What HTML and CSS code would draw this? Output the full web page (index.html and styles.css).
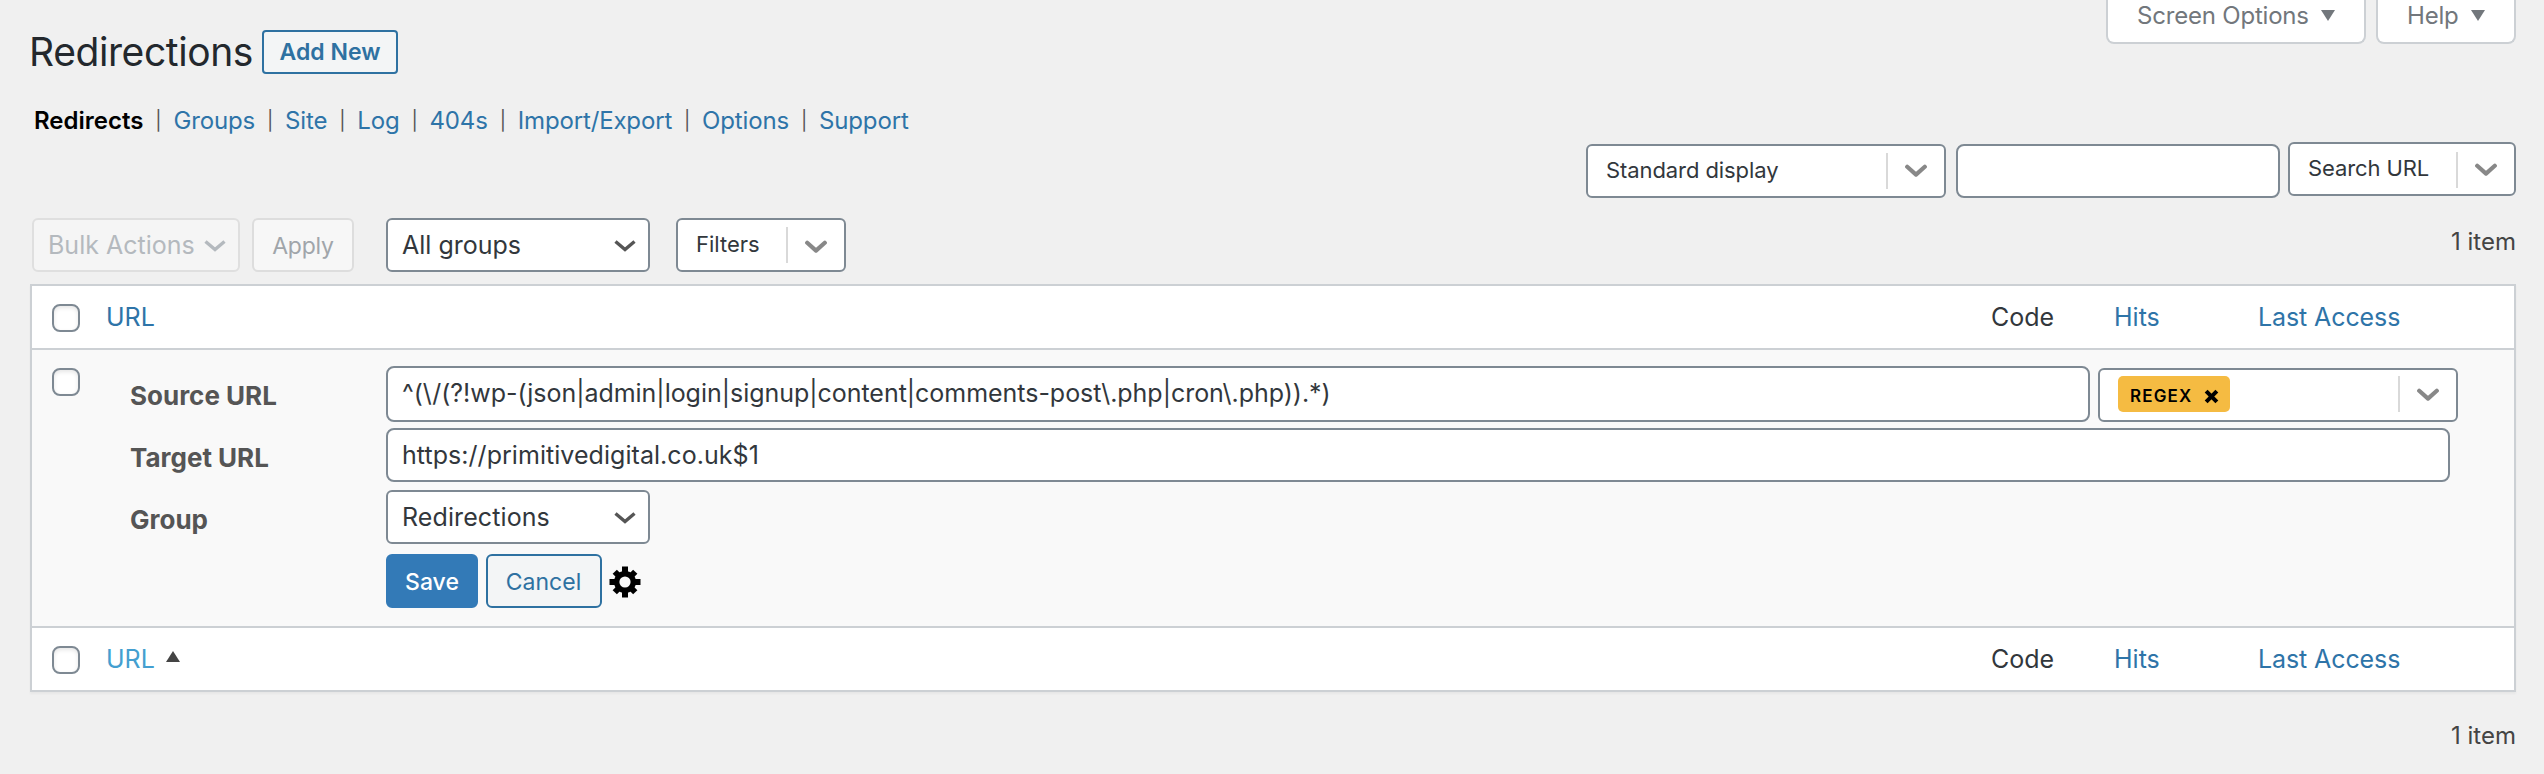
FILE: index.html
```html
<!DOCTYPE html>
<html lang="en">
<head>
<meta charset="utf-8">
<title>Redirections</title>
<link rel="stylesheet" href="styles.css">
</head>
<body>
<svg class="defs" aria-hidden="true">
  <symbol id="thin" viewBox="0 0 22 14"><path d="M1.5 2.5 11 10.5 20.5 2.5" fill="none" stroke="currentColor" stroke-width="3.4"/></symbol>
  <symbol id="thick" viewBox="0 0 22 14"><path d="M2.2 2.8 11 10.6 19.8 2.8" fill="none" stroke="currentColor" stroke-width="4.2" stroke-linecap="round" stroke-linejoin="round"/></symbol>
</svg>
<header class="top">
  <div class="title-row">
    <h1 class="title">Redirections</h1>
    <a class="add-new">Add New</a>
  </div>
  <div class="tabs">
    <button class="tab tab-options">Screen Options<i class="down"></i></button>
    <button class="tab tab-help">Help<i class="down"></i></button>
  </div>
</header>
<nav class="subnav">
  <b>Redirects</b><span class="bar">|</span><a>Groups</a><span class="bar">|</span><a>Site</a><span class="bar">|</span><a>Log</a><span class="bar">|</span><a>404s</a><span class="bar">|</span><a>Import/Export</a><span class="bar">|</span><a>Options</a><span class="bar">|</span><a>Support</a>
</nav>
<div class="search-row">
  <div class="combo display"><span class="combo-text">Standard display</span><i class="rule"></i><svg class="chev"><use href="#thick"/></svg></div>
  <input class="field search" type="text" aria-label="Search">
  <div class="combo search-by"><span class="combo-text">Search URL</span><i class="rule"></i><svg class="chev"><use href="#thick"/></svg></div>
</div>
<div class="actions">
  <div class="select bulk"><span>Bulk Actions</span><svg class="chev"><use href="#thin"/></svg></div>
  <button class="apply">Apply</button>
  <div class="select groups"><span>All groups</span><svg class="chev"><use href="#thin"/></svg></div>
  <div class="combo filters"><span class="combo-text">Filters</span><i class="rule"></i><svg class="chev"><use href="#thick"/></svg></div>
  <span class="count">1 item</span>
</div>
<main class="table">
  <div class="row head">
    <i class="check"></i><a class="col-url">URL</a><span class="col-code">Code</span><a class="col-hits">Hits</a><a class="col-last">Last Access</a>
  </div>
  <div class="edit">
    <i class="check"></i>
    <div class="form">
      <div class="line source-line">
        <label>Source URL</label>
        <input class="field source" type="text" value="^(\/(?!wp-(json|admin|login|signup|content|comments-post\.php|cron\.php)).*)">
        <div class="combo flags">
          <span class="badge">REGEX<svg class="cross" viewBox="0 0 14 14"><path d="M2 2l10 10M12 2l-10 10" stroke="#000" stroke-width="3.8"/></svg></span>
          <i class="rule"></i><svg class="chev"><use href="#thick"/></svg>
        </div>
      </div>
      <div class="line target-line">
        <label>Target URL</label>
        <input class="field target" type="text" value="https://primitivedigital.co.uk$1">
      </div>
      <div class="line group-line">
        <label>Group</label>
        <div class="select groups"><span class="wide">Redirections</span><svg class="chev"><use href="#thin"/></svg></div>
      </div>
      <div class="buttons">
        <button class="save">Save</button>
        <button class="cancel">Cancel</button>
        <svg class="gear" viewBox="-16 -16 32 32">
          <g fill="#000"><path d="M-3-15.5H3V15.5H-3z"/><path d="M-15.5-3V3H15.5V-3z"/><path d="M-3-14.5H3V14.5H-3z" transform="rotate(45)"/><path d="M-3-14.5H3V14.5H-3z" transform="rotate(-45)"/><circle r="11"/></g>
          <circle r="5.6" fill="#f9f9f9"/>
        </svg>
      </div>
    </div>
  </div>
  <div class="row foot">
    <i class="check"></i><a class="col-url sorted">URL<i class="up"></i></a><span class="col-code">Code</span><a class="col-hits">Hits</a><a class="col-last">Last Access</a>
  </div>
</main>
<div class="bottom"><span class="count">1 item</span></div>
</body>
</html>
```
FILE: styles.css
```css
* { box-sizing: border-box; }
body {
  margin: 0;
  height: 774px;
  padding: 0 28px 0 30px;
  overflow: hidden;
  background: #f0f0f0;
  color: #32373c;
  font: 25px/30px Inter, "Liberation Sans", sans-serif;
}
input, button { font: inherit; margin: 0; }
i { font-style: normal; }
a { color: #2e74a8; }
.defs { display: none; }
.chev { flex: none; width: 22px; height: 14px; }

.top { display: flex; justify-content: space-between; height: 106px; }
.title-row { display: flex; padding-top: 30px; height: 74px; }
.title {
  width: 233px;
  margin: 0 0 0 -1px;
  font-size: 39px;
  line-height: 44px;
  font-weight: 400;
  letter-spacing: -0.4px;
  color: #23282d;
  white-space: nowrap;
}
.add-new {
  width: 136px;
  height: 44px;
  border: 2px solid #2e71a1;
  border-radius: 4px;
  background: #f3f5f6;
  font-size: 23px;
  font-weight: 600;
  line-height: 41px;
  text-align: center;
  color: #2e71a1;
}
.tabs { display: flex; gap: 10px; }
.tab {
  display: flex;
  align-items: center;
  height: 44px;
  padding: 0 0 10px;
  border: 2px solid #ccd0d4;
  border-top: 0;
  border-radius: 0 0 8px 8px;
  background: #fff;
  font-size: 24px;
  letter-spacing: -0.2px;
  color: #72777c;
}
.tab-options { width: 260px; padding-left: 29px; }
.tab-help { width: 140px; padding-left: 29px; }
.down {
  margin: -2px 0 0 12px;
  border: 7px solid transparent;
  border-top: 11px solid #72777c;
  border-bottom: 0;
}
.tab-help .down { margin-left: 12px; }

.subnav {
  display: flex;
  height: 36px;
  padding-left: 4px;
  font-size: 24px;
  letter-spacing: -0.15px;
}
.subnav b { font-weight: 600; letter-spacing: 0; color: #000; }
.bar { width: 30px; font-size: 19px; text-align: center; color: #555; }

.search-row { display: flex; justify-content: flex-end; align-items: flex-start; height: 76px; }
.combo {
  display: flex;
  align-items: center;
  height: 54px;
  padding-right: 17px;
  border: 2px solid #7e8993;
  border-radius: 6px;
  background: #fff;
  color: #32373c;
}
.combo .chev { margin-left: 17px; color: #888; }
.combo-text { flex: 1; padding: 0 0 2px 18px; font-size: 22px; }
.rule { width: 2px; height: 36px; background: #d9d9d9; }
.display { width: 360px; margin: 2px 10px 0 0; }
.display .combo-text { letter-spacing: -0.08px; }
.search-by { width: 228px; margin-left: 8px; }
.search-by .combo-text { letter-spacing: -0.1px; }
.search-by .rule, .search-by .chev { margin-top: 2px; }
.field {
  height: 54px;
  padding: 0 14px;
  border: 2px solid #7e8993;
  border-radius: 8px;
  background: #fff;
  color: #32373c;
}
.search { width: 324px; margin-top: 2px; }

.actions { display: flex; height: 66px; padding-left: 2px; }
.select {
  display: flex;
  align-items: center;
  justify-content: space-between;
  height: 54px;
  padding: 0 12px 0 14px;
  border: 2px solid #7e8993;
  border-radius: 6px;
  background: #fff;
}
.select .chev { color: #555; margin-top: 2px; }
.bulk { width: 208px; border-color: #dfdfdf; background: #f5f5f5; color: #b4b9be; }
.bulk .chev { color: #b4b9be; }
.apply {
  width: 102px;
  height: 54px;
  margin: 0 32px 0 12px;
  padding: 2px 0 0;
  border: 2px solid #dddddd;
  border-radius: 6px;
  background: #f7f7f7;
  font-size: 23px;
  letter-spacing: -0.2px;
  color: #a0a5aa;
}
.groups { width: 264px; }
.filters { width: 170px; margin-left: 26px; }
.filters .chev { margin-top: 3px; }
.count {
  margin-left: auto;
  padding-top: 9px;
  font-size: 24px;
  letter-spacing: 0;
  color: #444;
}
.wide { letter-spacing: 0.1px; }

.table {
  height: 408px;
  border: 2px solid #ccd0d4;
  background: #fff;
  box-shadow: 0 2px 2px rgba(0, 0, 0, 0.04);
}
.row {
  display: grid;
  grid-template-columns: 74px 1885px 123px 144px 1fr;
  align-items: center;
  height: 62px;
}
.col-last { letter-spacing: -0.1px; }
.check {
  width: 28px;
  height: 28px;
  border: 2px solid #7e8993;
  border-radius: 8px;
  background: #fff;
  box-shadow: inset 0 2px 4px rgba(0, 0, 0, 0.1);
}
.row .check { margin: 2px 0 0 20px; }
.sorted { display: flex; align-items: center; color: #449fd0; }
.up {
  margin: -6px 0 0 11px;
  border: 7px solid transparent;
  border-bottom: 11px solid #444;
  border-top: 0;
}
.edit {
  display: flex;
  height: 280px;
  padding-left: 20px;
  border: solid #ccd0d4;
  border-width: 2px 0;
  background: #f9f9f9;
}
.edit .check { margin-top: 18px; }
.form { flex: 1; padding: 16px 0 0 50px; }
.line { display: flex; align-items: flex-start; }
.line label {
  width: 256px;
  padding-top: 15px;
  font-size: 26px;
  font-weight: 700;
  color: #555;
}
.source-line { height: 62px; }
.target-line { height: 62px; }
.group-line { height: 64px; }
.source { width: 1704px; height: 56px; margin-right: 8px; padding-bottom: 2px; letter-spacing: -0.03px; }
.flags { width: 360px; margin-top: 2px; padding-left: 18px; }
.flags .rule { margin: 0 0 2px auto; }
.badge {
  display: flex;
  align-items: center;
  width: 112px;
  height: 36px;
  margin-bottom: 2px;
  padding: 4px 0 0 12px;
  border-radius: 5px;
  background: #f5bb42;
  font-size: 17px;
  font-weight: 600;
  letter-spacing: 1.15px;
  color: #000;
}
.cross { width: 15px; height: 15px; margin-left: 12px; }
.target { width: 2064px; letter-spacing: 0.05px; }
.buttons { display: flex; align-items: center; height: 54px; padding-left: 256px; }
.save, .cancel {
  height: 54px;
  padding: 1px 0 0;
  border: 2px solid #337ab7;
  border-radius: 6px;
  background: #337ab7;
  font-size: 23px;
  color: #fff;
}
.save { width: 92px; font-weight: 500; }
.cancel { width: 116px; margin: 0 7px 0 8px; padding-right: 1px; border-color: #2e71a1; background: #f3f5f6; color: #2e71a1; }
.gear { width: 32px; height: 32px; margin-top: 1px; }
.bottom { display: flex; padding-top: 20px; }
```
